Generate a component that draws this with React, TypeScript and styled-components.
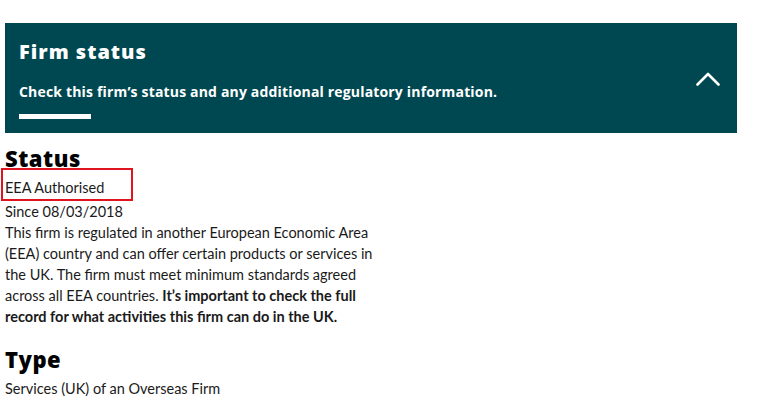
import React from "react";
import styled, { createGlobalStyle } from "styled-components";

const GlobalStyle = createGlobalStyle`
  body {
    margin: 0;
    background: #fff;
    font-family: Lato, "Liberation Sans", sans-serif;
  }
`;

const Page = styled.div`
  padding: 23px 0 0 5px;
`;

const Banner = styled.div`
  width: 732px;
  height: 110px;
  box-sizing: border-box;
  background: #004851;
  color: #fff;
  display: flex;
  align-items: center;
  justify-content: space-between;
  padding: 0 17px 0 14px;
`;

const BannerText = styled.div`
  display: flex;
  flex-direction: column;
  align-self: stretch;
  padding-top: 15px;
`;

const BannerTitle = styled.h2`
  margin: 0;
  font-family: "Open Sans", sans-serif;
  font-weight: 800;
  font-size: 20px;
  line-height: 28px;
  letter-spacing: 1px;
`;

const BannerSub = styled.p`
  margin: 16px 0 0;
  font-family: "Open Sans", sans-serif;
  font-weight: 700;
  font-size: 14px;
  line-height: 20px;
  letter-spacing: 0.17px;
`;

const Underline = styled.div`
  width: 72px;
  height: 5px;
  background: #fff;
  margin-top: 12px;
`;

const ToggleButton = styled.button`
  background: none;
  border: 0;
  padding: 0;
  cursor: pointer;
  display: flex;
`;

const Section = styled.section`
  width: 375px;
  margin-top: 12px;
`;

const Heading = styled.h3`
  margin: 0;
  font-family: "Open Sans", sans-serif;
  font-weight: 800;
  font-size: 22px;
  line-height: 26px;
  letter-spacing: 0.5px;
  color: #000;
`;

const Text = styled.p<{ $gap?: number }>`
  margin: 0 0 ${(p) => p.$gap ?? 0}px;
  font-size: 14.5px;
  line-height: 21px;
  color: #1a1a1a;

  strong {
    font-weight: 700;
  }
`;

const Highlight = styled.div`
  position: relative;
  margin-top: 6px;

  &::after {
    content: "";
    position: absolute;
    left: -4px;
    top: -9px;
    width: 132px;
    height: 33px;
    box-sizing: border-box;
    border: 2px solid #e0141e;
  }
`;

const TypeSection = styled(Section)`
  margin-top: 19px;

  ${Text} {
    margin-top: 6px;
  }
`;

const ChevronUp = () => (
  <svg width="24" height="15" viewBox="0 0 24 15" fill="none">
    <polyline
      points="1.5,13.5 12,3 22.5,13.5"
      stroke="#fff"
      strokeWidth="2.6"
      strokeLinecap="round"
      strokeLinejoin="round"
    />
  </svg>
);

export default function App() {
  return (
    <Page>
      <GlobalStyle />
      <Banner>
        <BannerText>
          <BannerTitle>Firm status</BannerTitle>
          <BannerSub>
            Check this firm’s status and any additional regulatory information.
          </BannerSub>
          <Underline />
        </BannerText>
        <ToggleButton aria-label="Collapse">
          <ChevronUp />
        </ToggleButton>
      </Banner>

      <Section>
        <Heading>Status</Heading>
        <Highlight>
          <Text $gap={3}>EEA Authorised</Text>
        </Highlight>
        <Text>Since 08/03/2018</Text>
        <Text>
          This firm is regulated in another European Economic Area (EEA)
          country and can offer certain products or services in the UK. The
          firm must meet minimum standards agreed across all EEA countries.{" "}
          <strong>
            It’s important to check the full record for what activities this
            firm can do in the UK.
          </strong>
        </Text>
      </Section>

      <TypeSection>
        <Heading>Type</Heading>
        <Text>Services (UK) of an Overseas Firm</Text>
      </TypeSection>
    </Page>
  );
}
